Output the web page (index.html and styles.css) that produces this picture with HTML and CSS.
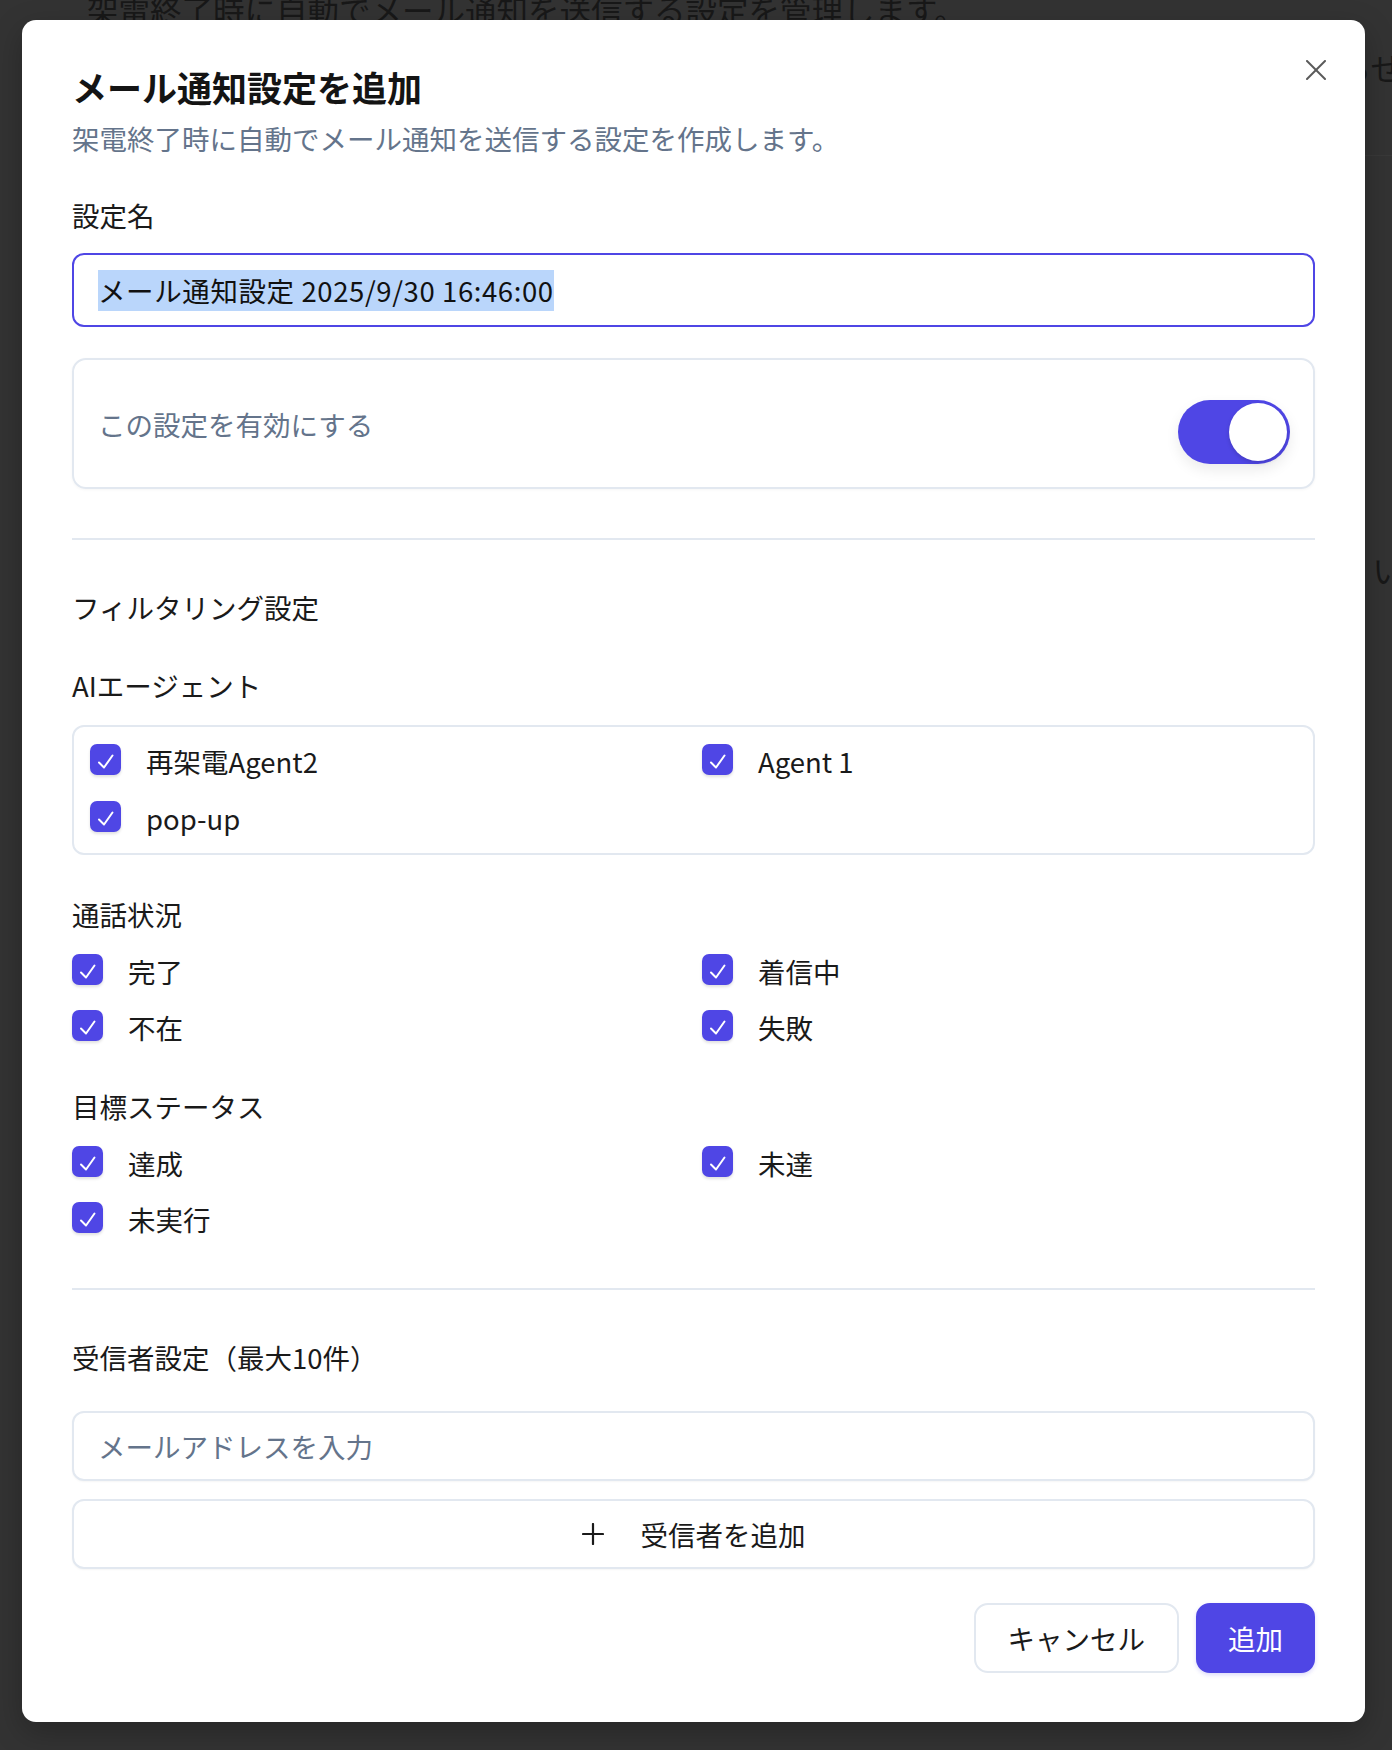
FILE: index.html
```html
<!DOCTYPE html>
<html lang="ja">
<head>
    <meta charset="UTF-8">
    <meta name="viewport" content="width=device-width, initial-scale=1.0">
    <title>メール通知設定</title>
    <link rel="stylesheet" href="styles.css">
</head>
<body>
    <!-- Settings page, dimmed behind the dialog -->
    <div class="page" aria-hidden="true">
        <header class="page-header">
            <p class="page-desc">架電終了時に自動でメール通知を送信する設定を管理します。</p>
            <div class="page-toolbar"><span>テストメールを送信してお知らせ</span></div>
        </header>
        <div class="page-body">
            <p class="page-note">メール通知設定はまだありません。新しい設定を追加してくださ い</p>
        </div>
    </div>

    <!-- Add dialog -->
    <div class="modal" role="dialog" aria-labelledby="modalTitle">
        <button class="modal-close" type="button" aria-label="閉じる">
            <svg width="20" height="20" viewBox="0 0 20 20" fill="none" stroke="currentColor" stroke-width="2" stroke-linecap="round">
                <path d="M1 1 L19 19"/>
                <path d="M19 1 L1 19"/>
            </svg>
        </button>

        <h2 id="modalTitle" class="modal-title">メール通知設定を追加</h2>
        <p class="modal-desc">架電終了時に自動でメール通知を送信する設定を作成します。</p>

        <div class="field">
            <label class="field-label" for="settingName">設定名</label>
            <div id="settingName" class="text-input is-focused"><span class="selected">メール通知設定 2025/9/30 16:46:00</span></div>
        </div>

        <div class="switch-card">
            <span class="switch-label">この設定を有効にする</span>
            <span class="switch is-on" role="switch" aria-checked="true"><span class="switch-thumb"></span></span>
        </div>

        <hr class="divider">

        <h3 class="section-title">フィルタリング設定</h3>

        <div class="filter-group">
            <div class="group-label">AIエージェント</div>
            <div class="check-grid boxed" id="agentList"></div>
        </div>

        <div class="filter-group">
            <div class="group-label">通話状況</div>
            <div class="check-grid" id="callStatusList"></div>
        </div>

        <div class="filter-group">
            <div class="group-label">目標ステータス</div>
            <div class="check-grid" id="goalStatusList"></div>
        </div>

        <hr class="divider">

        <h3 class="section-title">受信者設定（最大10件）</h3>

        <input type="email" class="email-input" placeholder="メールアドレスを入力">

        <button class="add-recipient" type="button">
            <svg width="22" height="22" viewBox="0 0 22 22" fill="none" stroke="currentColor" stroke-width="2.2" stroke-linecap="round">
                <path d="M11 1 V21"/>
                <path d="M1 11 H21"/>
            </svg>
            <span>受信者を追加</span>
        </button>

        <div class="modal-footer">
            <button class="btn btn-outline" type="button">キャンセル</button>
            <button class="btn btn-primary" type="button">追加</button>
        </div>
    </div>

    <script>
        const agents = ['再架電Agent2', 'Agent 1', 'pop-up'];
        const callStatuses = ['完了', '着信中', '不在', '失敗'];
        const goalStatuses = ['達成', '未達', '未実行'];

        const checkIcon = `
            <svg width="31" height="31" viewBox="0 0 31 31" fill="none" stroke="#fff" stroke-width="2" stroke-linecap="round" stroke-linejoin="round">
                <polyline points="9,18.5 14,23.5 22.5,11.5"/>
            </svg>`;

        // Render a list of checked options into a grid
        function renderChecks(id, items) {
            const grid = document.getElementById(id);
            items.forEach(item => {
                const row = document.createElement('label');
                row.className = 'check';
                row.innerHTML = `<span class="check-box">${checkIcon}</span><span class="check-text">${item}</span>`;
                grid.appendChild(row);
            });
        }

        renderChecks('agentList', agents);
        renderChecks('callStatusList', callStatuses);
        renderChecks('goalStatusList', goalStatuses);
    </script>
</body>
</html>
```

FILE: styles.css
```css
* {
    box-sizing: border-box;
    margin: 0;
    padding: 0;
}

body {
    font-family: "Noto Sans CJK JP", "Noto Sans", sans-serif;
    background-color: #333333;
    width: 1392px;
    height: 1750px;
    overflow: hidden;
    position: relative;
}

/* dimmed page underneath */
.page {
    padding-left: 87px;
    color: #181818;
    font-size: 31.5px;
    line-height: 40px;
    white-space: nowrap;
}

.page-header {
    margin-top: -11px;
    padding-bottom: 68px;
    border-bottom: 1px solid #393939;
}

.page-toolbar {
    margin-top: 18px;
    display: flex;
    justify-content: flex-end;
    margin-right: -10px;
}

.page-body {
    padding-top: 393px;
    display: flex;
    justify-content: flex-end;
    margin-right: -12px;
}

/* dialog */
.modal {
    position: absolute;
    top: 20px;
    left: 22px;
    width: 1343px;
    background-color: #fff;
    border-radius: 14px;
    padding: 44px 50px 49px;
    color: #1a1a1a;
    font-size: 27.5px;
    line-height: 40px;
    box-shadow: 0 10px 30px rgba(0, 0, 0, 0.25);
}

.modal-close {
    position: absolute;
    top: 36px;
    right: 35px;
    width: 28px;
    height: 28px;
    border: none;
    background: none;
    color: #5a5a5a;
    display: flex;
    align-items: center;
    justify-content: center;
    cursor: pointer;
}

.modal-title {
    font-size: 35px;
    line-height: 46px;
    font-weight: 700;
    color: #141414;
}

.modal-desc {
    margin-top: 8px;
    color: #64748b;
}

.field {
    margin-top: 37px;
}

.field-label {
    display: block;
    margin-bottom: 18px;
}

.text-input {
    height: 74px;
    display: flex;
    align-items: center;
    padding: 0 24px;
    border: 2px solid #4f46e5;
    border-radius: 12px;
    color: #111;
}

.text-input .selected {
    display: inline-block;
    line-height: 41px;
    letter-spacing: 0.6px;
    background-color: #bad6fb;
}

.switch-card {
    margin-top: 31px;
    height: 131px;
    display: flex;
    justify-content: space-between;
    align-items: center;
    padding: 0 23px 0 24px;
    border: 2px solid #e2e8f0;
    border-radius: 14px;
    box-shadow: 0 1px 3px rgba(0, 0, 0, 0.04);
}

.switch-label {
    color: #64748b;
}

.switch {
    width: 112px;
    height: 64px;
    margin-top: 17px;
    border-radius: 32px;
    background-color: #e2e8f0;
    display: flex;
    align-items: center;
    padding: 3px;
    box-shadow: 0 6px 14px rgba(0, 0, 0, 0.08);
}

.switch.is-on {
    background-color: #4f46e5;
    justify-content: flex-end;
}

.switch-thumb {
    width: 58px;
    height: 58px;
    border-radius: 50%;
    background-color: #fff;
    box-shadow: 0 2px 4px rgba(0, 0, 0, 0.15);
}

.divider {
    border: none;
    height: 2px;
    background-color: #e2e8f0;
    margin-top: 49px;
}

.section-title {
    margin-top: 47px;
    font-size: 27.5px;
    line-height: 40px;
    font-weight: 400;
}

.filter-group {
    margin-top: 38px;
}

.filter-group + .filter-group {
    margin-top: 39px;
}

.check-grid {
    display: grid;
    grid-template-columns: 1fr 1fr;
    column-gap: 17px;
    row-gap: 16px;
    margin-top: 17px;
}

.check-grid.boxed {
    margin-top: 20px;
    padding: 14px 16px 15px;
    row-gap: 17px;
    border: 2px solid #e2e8f0;
    border-radius: 12px;
}

.check {
    display: flex;
    align-items: center;
    gap: 25px;
    height: 40px;
}

.check-box {
    width: 31px;
    height: 31px;
    flex-shrink: 0;
    border-radius: 7px;
    background-color: #4f46e5;
    box-shadow: 0 2px 3px rgba(0, 0, 0, 0.12);
    margin-top: -3px;
}

.check-box svg {
    display: block;
}

.email-input {
    display: block;
    width: 100%;
    height: 70px;
    margin-top: 34px;
    padding: 0 24px;
    border: 2px solid #e2e8f0;
    border-radius: 12px;
    font-family: inherit;
    font-size: 27.5px;
    color: #1a1a1a;
    outline: none;
    box-shadow: 0 1px 2px rgba(0, 0, 0, 0.04);
}

.email-input::placeholder {
    color: #64748b;
}

.add-recipient {
    width: 100%;
    height: 70px;
    margin-top: 18px;
    display: flex;
    align-items: center;
    justify-content: center;
    gap: 37px;
    border: 2px solid #e2e8f0;
    border-radius: 12px;
    background-color: #fff;
    font-family: inherit;
    font-size: 27.5px;
    color: #1a1a1a;
    cursor: pointer;
    box-shadow: 0 1px 2px rgba(0, 0, 0, 0.04);
}

.modal-footer {
    margin-top: 34px;
    display: flex;
    justify-content: flex-end;
    gap: 17px;
}

.btn {
    height: 70px;
    padding: 0 32px;
    border-radius: 14px;
    font-family: inherit;
    font-size: 27.5px;
    cursor: pointer;
}

.btn-outline {
    border: 2px solid #e2e8f0;
    background-color: #fff;
    color: #1a1a1a;
}

.btn-primary {
    padding: 0 30px;
    border: 2px solid #4f46e5;
    background-color: #4f46e5;
    color: #fff;
    box-shadow: 0 2px 4px rgba(79, 70, 229, 0.2);
}
```
